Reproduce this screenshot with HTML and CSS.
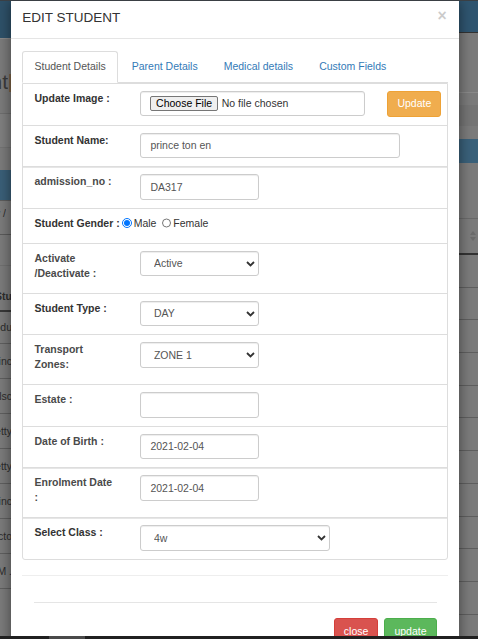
FILE: index.html
```html
<!DOCTYPE html>
<html lang="en">
<head>
<meta charset="utf-8">
<title>Edit Student</title>
<link rel="stylesheet" href="styles.css">
</head>
<body>
<div class="page">
  <div class="pcol pleft">
    <div class="l-nav"></div>
    <div class="l-title"><div class="clip">Student</div><span class="l-mark"></span></div>
    <div class="l-crumb"></div>
    <div class="l-gap"></div>
    <div class="l-phead"></div>
    <div class="l-filter"><div class="clip sm">Show /</div></div>
    <div class="l-gap2"></div>
    <div class="l-th"><div class="clip th">Stu</div></div>
    <div class="l-row first"><div class="clip sm">Produ</div></div>
    <div class="l-row"><div class="clip sm">Princ</div></div>
    <div class="l-row"><div class="clip sm">Kalsc</div></div>
    <div class="l-row"><div class="clip sm">Betty</div></div>
    <div class="l-row"><div class="clip sm">Getty</div></div>
    <div class="l-row"><div class="clip sm">Vinc</div></div>
    <div class="l-row"><div class="clip sm">Victo</div></div>
    <div class="l-row"><div class="clip sm">M .</div></div>
  </div>
  <div class="pcol pright">
    <div class="r-nav"></div>
    <div class="r-a"></div>
    <div class="r-b"></div>
    <div class="r-c"></div>
    <div class="r-d"></div>
    <div class="r-phead"></div>
    <div class="r-e"></div>
    <div class="r-th">
      <svg class="sort" width="6" height="10" viewBox="0 0 6 10"><path d="M3 0 L6 4 L0 4 Z M3 10 L6 6 L0 6 Z" fill="#6b6b6b"/></svg>
    </div>
    <div class="r-row"></div>
    <div class="r-row"></div>
    <div class="r-row"></div>
    <div class="r-row"></div>
    <div class="r-row"></div>
    <div class="r-row"></div>
    <div class="r-row"></div>
    <div class="r-row"></div>
    <div class="r-row"></div>
    <div class="r-row"></div>
    <div class="r-row"></div>
  </div>
</div>

<div class="modal">
  <div class="modal-header">
    <h4 class="modal-title">EDIT STUDENT</h4>
    <span class="close">×</span>
  </div>
  <div class="modal-body">
    <ul class="tabs">
      <li class="tab active"><a>Student Details</a></li>
      <li class="tab"><a>Parent Details</a></li>
      <li class="tab"><a>Medical details</a></li>
      <li class="tab"><a>Custom Fields</a></li>
    </ul>
    <div class="panel">
      <div class="frow">
        <div class="col c3"><label class="lbl">Update Image :</label></div>
        <div class="col c7">
          <div class="file-box"><span class="file-btn">Choose File</span><span class="file-txt">No file chosen</span></div>
        </div>
        <div class="col c2"><button class="btn btn-warning">Update</button></div>
      </div>
      <div class="frow dbl">
        <div class="col c3"><label class="lbl">Student Name:</label></div>
        <div class="col c8"><input class="fc" type="text" value="prince ton en"></div>
      </div>
      <div class="frow">
        <div class="col c3"><label class="lbl lt">admission_no :</label></div>
        <div class="col c4"><input class="fc" type="text" value="DA317"></div>
      </div>
      <div class="frow">
        <div class="col c12"><label class="lbl inl">Student Gender :</label><input class="radio" type="radio" name="g" checked><span>Male</span> <input class="radio" type="radio" name="g"><span>Female</span></div>
      </div>
      <div class="frow">
        <div class="col c3"><label class="lbl lt">Activate /Deactivate :</label></div>
        <div class="col c4">
          <div class="sel-wrap">
            <select class="fc sel"><option>Active</option></select>
            <svg class="chev" width="9" height="6" viewBox="0 0 9 6"><polyline points="1,1 4.5,4.5 8,1" fill="none" stroke="#333" stroke-width="1.8"/></svg>
          </div>
        </div>
      </div>
      <div class="frow">
        <div class="col c3"><label class="lbl">Student Type :</label></div>
        <div class="col c4">
          <div class="sel-wrap">
            <select class="fc sel"><option>DAY</option></select>
            <svg class="chev" width="9" height="6" viewBox="0 0 9 6"><polyline points="1,1 4.5,4.5 8,1" fill="none" stroke="#333" stroke-width="1.8"/></svg>
          </div>
        </div>
      </div>
      <div class="frow">
        <div class="col c3"><label class="lbl lt">Transport Zones:</label></div>
        <div class="col c4">
          <div class="sel-wrap">
            <select class="fc sel"><option>ZONE 1</option></select>
            <svg class="chev" width="9" height="6" viewBox="0 0 9 6"><polyline points="1,1 4.5,4.5 8,1" fill="none" stroke="#333" stroke-width="1.8"/></svg>
          </div>
        </div>
      </div>
      <div class="frow">
        <div class="col c3"><label class="lbl lt">Estate :</label></div>
        <div class="col c4"><input class="fc" type="text" value=""></div>
      </div>
      <div class="frow dbl">
        <div class="col c3"><label class="lbl lt">Date of Birth :</label></div>
        <div class="col c4"><input class="fc" type="text" value="2021-02-04"></div>
      </div>
      <div class="frow dbl">
        <div class="col c3"><label class="lbl lt">Enrolment Date :</label></div>
        <div class="col c4"><input class="fc" type="text" value="2021-02-04"></div>
      </div>
      <div class="frow last">
        <div class="col c3"><label class="lbl">Select Class :</label></div>
        <div class="col c6">
          <div class="sel-wrap">
            <select class="fc sel"><option>4w</option></select>
            <svg class="chev" width="9" height="6" viewBox="0 0 9 6"><polyline points="1,1 4.5,4.5 8,1" fill="none" stroke="#333" stroke-width="1.8"/></svg>
          </div>
        </div>
      </div>
    </div>
    <hr class="sep">
  </div>
  <div class="modal-footer">
    <button class="btn btn-danger">close</button>
    <button class="btn btn-success">update</button>
  </div>
</div>

<div class="topline"></div>
<div class="hscroll"><div class="thumb"></div></div>
</body>
</html>
```
FILE: styles.css
```css
* { box-sizing: border-box; }
html, body { margin: 0; padding: 0; }
body {
  width: 478px;
  height: 639px;
  overflow: hidden;
  position: relative;
  font-family: "Liberation Sans", Arial, sans-serif;
  font-size: 10.5px;
  line-height: 15px;
  color: #333;
  background: #7b7b7b;
}

/* ---------- background page (dimmed by backdrop) ---------- */
.page { display: flex; height: 639px; }
.pcol { flex: 1; display: flex; flex-direction: column; background: #7b7b7b; }
.clip {
  width: 12px;
  display: flex;
  justify-content: flex-end;
  overflow: hidden;
  white-space: nowrap;
  color: #2c2c2c;
}
.l-nav { height: 39px; background: #2e5169; border-bottom: 1px solid #8a8a8a; flex: none; }
.l-title { height: 75px; flex: none; display: flex; align-items: flex-start; padding-top: 31px; border-bottom: 1px solid #6e6e6e; }
.l-title .clip { width: 8px; font-size: 21px; line-height: 24px; color: #3a3a3a; }
.l-mark { width: 3px; height: 18px; margin-left: 1px; margin-top: 4px; background: #7d6246; }
.l-crumb { height: 34px; flex: none; background: #7f7f7f; border-bottom: 1px solid #737373; }
.l-gap { height: 22px; flex: none; }
.l-phead { height: 30px; flex: none; background: #3a5f78; }
.l-filter { height: 35px; flex: none; padding-top: 5px; display: flex; border-top: 1px solid #5c5c5c; border-bottom: 1px solid #5a5a5a; }
.l-filter .clip { width: 6px; }
.l-gap2 { height: 31px; flex: none; border-bottom: 1px solid #707070; }
.l-th { height: 46px; flex: none; display: flex; align-items: flex-end; padding-bottom: 6px; border-bottom: 2px solid #383838; }
.l-th .clip { font-weight: bold; }
.l-row { height: 35px; flex: none; display: flex; align-items: center; border-bottom: 1px solid #5f5f5f; }
.l-row.first { height: 32px; }

.r-nav { height: 33px; flex: none; background: #2f5570; border-bottom: 1px solid #333; }
.r-a { height: 60px; flex: none; border-bottom: 1px solid #8a8a8a; }
.r-b { height: 12px; flex: none; }
.r-c { height: 21px; flex: none; background: #757575; }
.r-d { height: 13px; flex: none; }
.r-phead { height: 24px; flex: none; background: #3a617a; }
.r-e { height: 56px; flex: none; border-bottom: 1px solid #6a6a6a; }
.r-th { height: 36px; flex: none; display: flex; align-items: center; justify-content: flex-end; padding-right: 2px; border-bottom: 2px solid #333; }
.r-row { height: 32.7px; flex: none; border-bottom: 1px solid #5f5f5f; }

/* ---------- overlays ---------- */
.topline { position: absolute; left: 0; top: 0; width: 478px; height: 1px; background: #3a3f44; }
.hscroll { position: absolute; left: 0; bottom: 0; width: 478px; height: 3px; background: #202020; }
.hscroll .thumb { position: absolute; left: 49px; top: 0; width: 36px; height: 3px; background: #4a4a4a; }

/* ---------- modal ---------- */
.modal {
  position: absolute;
  left: 11px;
  top: -3.5px;
  width: 448px;
  height: 700px;
  background: #fff;
  box-shadow: 0 4px 12px rgba(0, 0, 0, 0.5);
}
.modal-header {
  display: flex;
  justify-content: space-between;
  align-items: flex-start;
  padding: 11.25px;
  border-bottom: 1px solid #e5e5e5;
}
.modal-title {
  margin: 0;
  font-size: 13.5px;
  line-height: 19.3px;
  font-weight: normal;
  color: #333;
}
.close {
  font-size: 15.75px;
  line-height: 15px;
  font-weight: bold;
  color: #000;
  opacity: 0.2;
  margin-top: 0;
  margin-right: 1px;
}
.modal-body { padding: 11.25px 11.25px 11.25px; }

.tabs {
  display: flex;
  list-style: none;
  margin: 0;
  padding: 0;
  border-bottom: 1px solid #ddd;
}
.tab { margin-bottom: -1px; margin-right: 1.5px; }
.tab a {
  display: block;
  padding: 7.5px 11.25px;
  line-height: 15px;
  border: 1px solid transparent;
  border-radius: 3px 3px 0 0;
  color: #337ab7;
}
.tab.active a {
  color: #555;
  background: #fff;
  border-color: #ddd;
  border-bottom-color: transparent;
}

.panel {
  border: 1px solid #ddd;
  border-radius: 0 0 3px 3px;
}
.frow {
  display: flex;
  align-items: flex-start;
  padding: 7px 0 8px;
  border-bottom: 1px solid #ddd;
}
.frow.dbl { box-shadow: 0 1px 0 #e6e6e6; position: relative; }
.frow.last { border-bottom: none; }
.col { padding: 0 11.25px; }
.c2 { flex: 0 0 16.6667%; }
.c3 { flex: 0 0 25%; }
.c4 { flex: 0 0 33.3333%; }
.c6 { flex: 0 0 50%; }
.c7 { flex: 0 0 58.3333%; }
.c8 { flex: 0 0 66.6667%; }
.c12 { flex: 0 0 100%; }

.lbl {
  display: block;
  margin-bottom: 4px;
  line-height: 15px;
  font-weight: bold;
  color: #333;
}
.lbl.lt { color: #4a4a4a; }
.lbl.inl { display: inline; margin-bottom: 0; }
.c12 { line-height: 15px; padding-bottom: 4px; }

.radio {
  width: 9.5px;
  height: 9.5px;
  margin: 0 2px 0 2.5px;
  vertical-align: -1px;
}

.fc {
  display: block;
  width: 100%;
  height: 25.5px;
  padding: 4.5px 9px;
  font-family: "Liberation Sans", Arial, sans-serif;
  font-size: 10.5px;
  line-height: 15px;
  color: #555;
  background: #fff;
  border: 1px solid #ccc;
  border-radius: 3px;
  box-shadow: inset 0 1px 1px rgba(0, 0, 0, 0.075);
  outline: none;
}
.sel-wrap { position: relative; }
.sel {
  -webkit-appearance: none;
  appearance: none;
  padding-left: 12.5px;
  padding-right: 16px;
}
.chev {
  position: absolute;
  right: 4px;
  top: 10px;
  pointer-events: none;
}

.file-box {
  display: flex;
  align-items: center;
  height: 25.5px;
  padding: 0 9px;
  border: 1px solid #ccc;
  border-radius: 3px;
  box-shadow: inset 0 1px 1px rgba(0, 0, 0, 0.075);
  color: #333;
}
.file-btn {
  display: inline-block;
  height: 15.5px;
  line-height: 13.5px;
  padding: 0 4.7px;
  border: 1px solid #767676;
  border-radius: 2px;
  background: #efefef;
  color: #000;
}
.file-txt { margin-left: 4px; color: #333; }

.btn {
  display: inline-block;
  padding: 4.5px 9px;
  font-family: "Liberation Sans", Arial, sans-serif;
  font-size: 10.5px;
  line-height: 15px;
  border: 1px solid transparent;
  border-radius: 3px;
  color: #fff;
  cursor: pointer;
}
.btn-warning { background: #f0ad4e; border-color: #eea236; }
.btn-danger { background: #d9534f; border-color: #d43f3a; }
.btn-success { background: #5cb85c; border-color: #4cae4c; }

.sep {
  margin: 15px 0 15.5px;
  border: 0;
  border-top: 1px solid #eee;
  height: 0;
}
.modal-footer {
  display: flex;
  justify-content: flex-end;
  gap: 6px;
  margin: 0 22.5px;
  padding: 15px 0;
  border-top: 1px solid #e5e5e5;
}
```
